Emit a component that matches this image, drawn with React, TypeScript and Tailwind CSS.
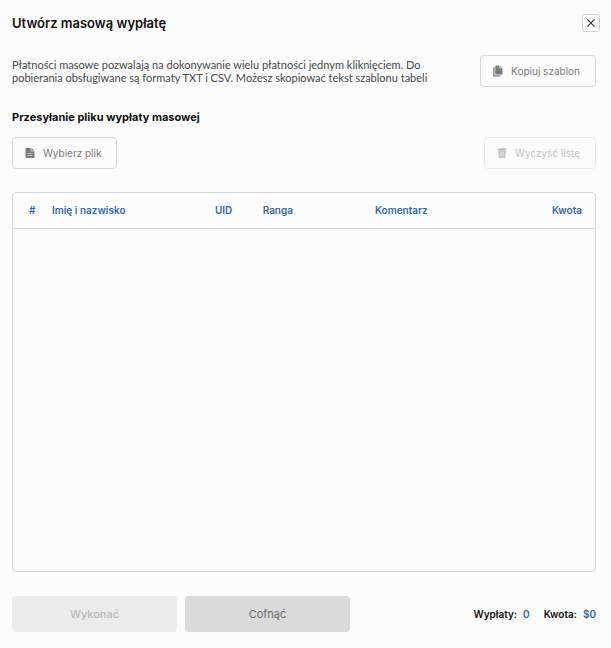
import React from 'react';

interface IconProps {
  className?: string;
}

const CopyIcon: React.FC<IconProps> = ({ className }) => (
  <svg viewBox="0 0 10 12" fill="currentColor" className={className} aria-hidden="true">
    <path d="M3 0.5h3.4v2.7h3.1v5.6a.7.7 0 0 1-.7.7H3a.7.7 0 0 1-.7-.7V1.2A.7.7 0 0 1 3 .5Z" />
    <path d="M7.1.7 9.3 2.6H7.1Z" />
    <path d="M.3 2.2h1.3v7.3c0 .4.3.7.7.7h5v.6a.7.7 0 0 1-.7.7H1a.7.7 0 0 1-.7-.7Z" />
  </svg>
);

const FileIcon: React.FC<IconProps> = ({ className }) => (
  <svg viewBox="0 0 10 12" fill="currentColor" className={className} aria-hidden="true">
    <path
      fillRule="evenodd"
      d="M1.2 1h4.6v3.2h3.7v6.1a.7.7 0 0 1-.7.7H1.2a.7.7 0 0 1-.7-.7V1.7A.7.7 0 0 1 1.2 1ZM2.3 6v.6h5.4V6Zm0 2v.6h5.4V8Z"
    />
    <path d="M6.4 1 9.4 3.6H6.4Z" />
  </svg>
);

const TrashIcon: React.FC<IconProps> = ({ className }) => (
  <svg viewBox="0 0 10 12" fill="currentColor" className={className} aria-hidden="true">
    <path d="M3.6.9h2.8l.5.7h2.4v1.3H.7V1.6h2.4Z" />
    <path
      fillRule="evenodd"
      d="M1.2 3.3h7.6l-.5 7a.8.8 0 0 1-.8.7h-5a.8.8 0 0 1-.8-.7ZM3 4.6l.2 5h.5l-.2-5Zm1.7 0v5h.6v-5Zm1.8 0-.2 5h.5l.2-5Z"
    />
  </svg>
);

const CloseIcon: React.FC<IconProps> = ({ className }) => (
  <svg viewBox="0 0 10 10" fill="none" stroke="currentColor" strokeWidth="1.1" className={className} aria-hidden="true">
    <path d="M1.5 1.3 8.5 8.7M8.5 1.3 1.5 8.7" />
  </svg>
);

interface OutlineButtonProps {
  icon: React.ReactNode;
  children: React.ReactNode;
  disabled?: boolean;
}

const OutlineButton: React.FC<OutlineButtonProps> = ({ icon, children, disabled }) => (
  <button
    type="button"
    disabled={disabled}
    className="flex h-8 shrink-0 items-center gap-2 whitespace-nowrap rounded border border-[#d5d6d7] pl-3 pr-[15px] text-[10px] leading-4 text-[#7b7b7b] disabled:border-[#e9e9e9] disabled:text-[#c0c0c0]"
  >
    {icon}
    {children}
  </button>
);

const columns = [
  { label: '#', className: 'w-[6.7%] pl-4 text-left' },
  { label: 'Imię i nazwisko', className: 'w-[28%] text-left' },
  { label: 'UID', className: 'w-[8.2%] text-left' },
  { label: 'Ranga', className: 'w-[19.3%] text-left' },
  { label: 'Komentarz', className: 'text-left' },
  { label: 'Kwota', className: 'pr-[13px] text-right' },
];

const App: React.FC = () => {
  return (
    <main className="flex min-h-screen flex-col bg-[#fcfcfc] pb-4 pl-3 pr-[15px] font-['Inter','Liberation_Sans',sans-serif] text-[#111]">
      <header className="-mr-1 flex items-center justify-between pt-[14px]">
        <h1 className="text-[13px] font-semibold leading-[18px]">Utwórz masową wypłatę</h1>
        <button
          type="button"
          aria-label="Zamknij"
          className="flex size-[18px] items-center justify-center rounded-[3px] border border-[#cfcfcf] bg-white text-[#333]"
        >
          <CloseIcon className="size-[10px]" />
        </button>
      </header>

      <section className="mt-[23px] flex items-start justify-between gap-4">
        <p className="max-w-[430px] pt-[3px] font-['Lato','Liberation_Sans',sans-serif] text-[11px] leading-[13px] text-[#45484a]">
          Płatności masowe pozwalają na dokonywanie wielu płatności jednym kliknięciem. Do
          <br />
          pobierania obsługiwane są formaty TXT i CSV. Możesz skopiować tekst szablonu tabeli
        </p>
        <OutlineButton icon={<CopyIcon className="h-3 w-[10px]" />}>Kopiuj szablon</OutlineButton>
      </section>

      <section className="mt-[22px]">
        <h2 className="text-[11px] font-bold leading-4">Przesyłanie pliku wypłaty masowej</h2>
        <div className="mt-3 flex items-center justify-between">
          <OutlineButton icon={<FileIcon className="h-3 w-[10px]" />}>Wybierz plik</OutlineButton>
          <OutlineButton disabled icon={<TrashIcon className="h-3 w-[10px]" />}>
            Wyczyść listę
          </OutlineButton>
        </div>
      </section>

      <div className="mt-[23px] flex-1 rounded border border-[#d5d6d7]">
        <table className="w-full table-fixed border-collapse text-[10px] leading-4">
          <thead>
            <tr className="h-[35px] border-b border-[#d5d6d7] text-[#3668a3]">
              {columns.map((column) => (
                <th key={column.label} scope="col" className={`font-semibold ${column.className}`}>
                  {column.label}
                </th>
              ))}
            </tr>
          </thead>
        </table>
      </div>

      <footer className="mt-6 flex items-center justify-between">
        <div className="flex flex-1 gap-2">
          <button
            type="button"
            disabled
            className="h-9 w-[165px] rounded bg-[#ebebeb] text-[11px] font-medium text-[#b8b8b8]"
          >
            Wykonać
          </button>
          <button type="button" className="h-9 w-[165px] rounded bg-[#dadada] text-[11px] text-[#6c6c6c]">
            Cofnąć
          </button>
        </div>
        <dl className="flex gap-[14px] text-[10px] font-semibold leading-4">
          <div className="flex gap-[6px]">
            <dt>Wypłaty:</dt>
            <dd className="text-[#3668a3]">0</dd>
          </div>
          <div className="flex gap-[6px]">
            <dt>Kwota:</dt>
            <dd className="text-[#3668a3]">$0</dd>
          </div>
        </dl>
      </footer>
    </main>
  );
};

export default App;
